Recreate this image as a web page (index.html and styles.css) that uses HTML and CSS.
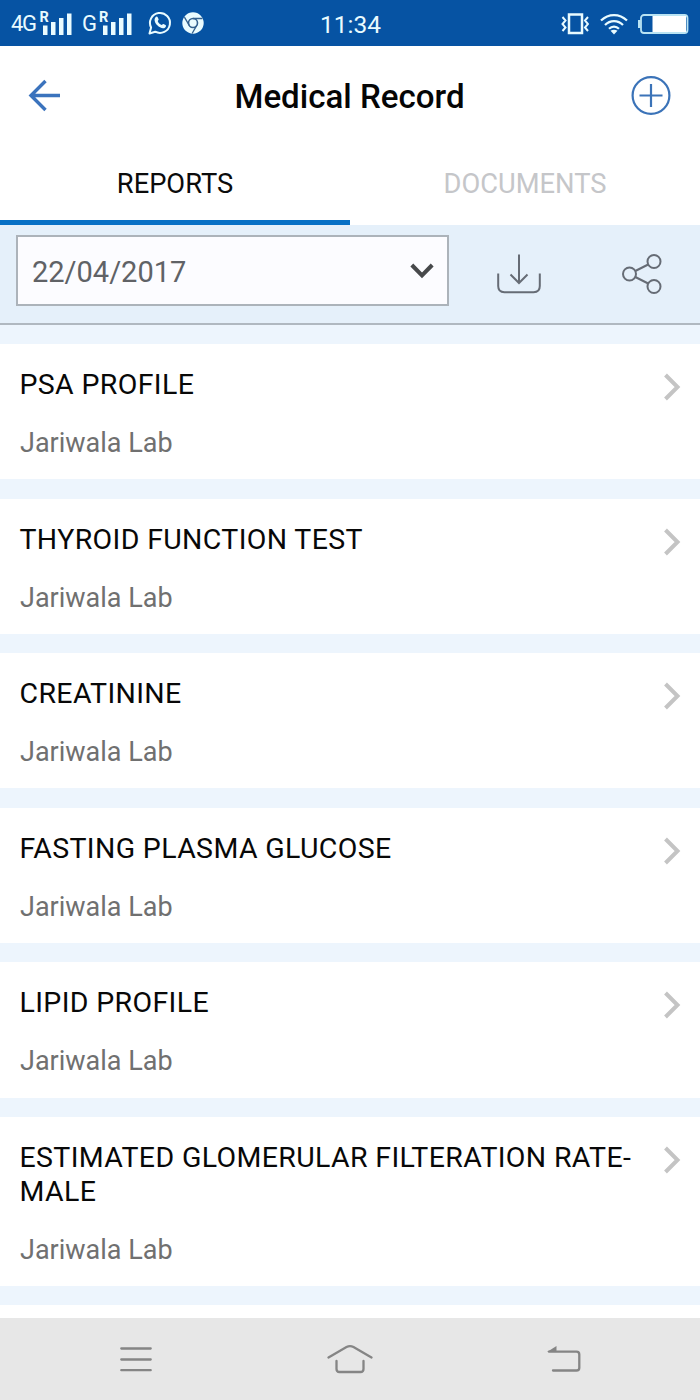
FILE: index.html
```html
<!DOCTYPE html>
<html lang="en">
<head>
<meta charset="utf-8">
<title>Medical Record</title>
<link rel="stylesheet" href="styles.css">
</head>
<body>
<div class="phone">
  <div class="status">
    <div class="status-left">
      <svg class="sim" width="66" height="46" viewBox="0 0 66 46">
        <text class="net" x="0" y="31" textLength="26">4G</text>
        <text class="roam" x="28.500" y="22">R</text>
        <path class="bars" d="M32 25.500h4.500v9.500H32zM40 22h4.500v13H40zM48 18h4.500v17H48zM56 13.500h4.500V35H56z"/>
      </svg>
      <svg class="sim" width="66" height="46" viewBox="0 0 66 46">
        <text class="net" x="5" y="31">G</text>
        <text class="roam" x="22" y="22">R</text>
        <path class="bars" d="M26 25.500h4.500v9.500H26zM34 22h4.500v13H34zM42 18h4.500v17H42zM50 13.500h4.500V35H50z"/>
      </svg>
      <svg class="whatsapp" width="26" height="26" viewBox="0 0 26 26">
        <path d="M2.500 23.500l1.600-6A10 10 0 1 1 8.200 21.700z" fill="none" stroke="#e9fbff" stroke-width="2" stroke-linejoin="round"/>
        <path d="M8.500 7.200c.8-.9 1.900-.8 2.300.2l.8 1.900c.3.700-.9 1.500-.8 2 .6 1.600 2 3 3.700 3.700.6.200 1.300-1.300 2-.9l2 1c.9.500.5 1.900-.5 2.600-2.200 1.500-5.500-.1-7.700-2.400S6.500 9.500 8.500 7.200z" fill="#e9fbff"/>
      </svg>
      <svg class="chrome" width="24" height="24" viewBox="0 0 24 24">
        <circle cx="12" cy="12" r="10.700" fill="#e9fbff"/>
        <circle cx="12" cy="12" r="4.500" fill="#e9fbff" stroke="#33618f" stroke-width="1.600"/>
        <path d="M12 7.500h9.500M8.100 14.200L3.400 6.200M15.900 14.200l-4.800 8.300" stroke="#33618f" stroke-width="1.300"/>
      </svg>
    </div>
    <div class="clock">11:34</div>
    <div class="status-right">
      <svg width="28" height="24" viewBox="0 0 28 24">
        <rect x="8" y="2.500" width="13" height="18.500" fill="none" stroke="#e9fbff" stroke-width="2.500"/>
        <path d="M1.500 5l3 3.500-3 3.500 3 3.500-3 3.500M27 5l-3 3.500 3 3.500-3 3.500 3 3.500" fill="none" stroke="#e9fbff" stroke-width="2"/>
      </svg>
      <svg class="wifi" width="28" height="22" viewBox="0 0 28 22">
        <path d="M1 7.500C8.500.2 19.500.2 27 7.500M5 12c5-5.300 13-5.300 18 0M9 15.800c3-3 7-3 10 0" fill="none" stroke="#e9fbff" stroke-width="2.200"/>
        <path d="M10.500 17.800q3.500-2 7 0L14 21.500z" fill="#e9fbff"/>
      </svg>
      <svg class="battery" width="52" height="22" viewBox="0 0 52 22">
        <rect x="4" y="2" width="46.500" height="18" rx="3" fill="none" stroke="#b9e3f3" stroke-width="1.800"/>
        <path d="M3.500 7H1v8h2.500" fill="#b9e3f3"/>
        <path d="M15.500 3h33.500v16H15.500z" fill="#fff"/>
      </svg>
    </div>
  </div>

  <header class="header">
    <svg width="34" height="40" viewBox="0 0 34 40">
      <path d="M32 20.500H3M17.500 6L3 20.500 17.500 35" fill="none" stroke="#3b73bd" stroke-width="3.400"/>
    </svg>
    <h1 class="title">Medical Record</h1>
    <svg class="add" width="40" height="40" viewBox="0 0 40 40">
      <g fill="none" stroke="#3b73b8" stroke-width="2.200"><circle cx="20" cy="20.500" r="18.400"/><path d="M20 9v23M8.500 20.500h23"/></g>
    </svg>
  </header>

  <nav class="tabs">
    <div class="tab tab-active">REPORTS</div>
    <div class="tab">DOCUMENTS</div>
  </nav>

  <section class="filter">
    <div class="select">
      <span class="date">22/04/2017</span>
      <svg width="24" height="18" viewBox="0 0 24 18"><path d="M1.800 3L12 13.500 22.200 3" fill="none" stroke="#47494b" stroke-width="4"/></svg>
    </div>
    <svg class="download" width="44" height="40" viewBox="0 0 44 40">
      <path d="M1.200 19.500V32q0 6.200 6.200 6.200h29.200q6.200 0 6.200-6.200V19.500M22 .5V29M13.500 20.500L22 29l8.500-8.500" fill="none" stroke="#666c75" stroke-width="2"/>
    </svg>
    <svg class="share" width="40" height="40" viewBox="0 0 40 40">
      <g fill="none" stroke="#666c75" stroke-width="2"><circle cx="7.500" cy="20" r="6.500"/><circle cx="32" cy="7.500" r="6.500"/><circle cx="32" cy="32.500" r="6.500"/><path d="M13.300 17L26.200 10.500M13.300 23l12.900 6.500"/></g>
    </svg>
  </section>

  <main class="list">
    <article class="card"><div><h2 class="name">PSA PROFILE</h2><p class="lab">Jariwala Lab</p></div><svg class="chev" width="18" height="28" viewBox="0 0 18 28"><path d="M2.500 2L14.500 14 2.500 26"/></svg></article>
    <article class="card"><div><h2 class="name">THYROID FUNCTION TEST</h2><p class="lab">Jariwala Lab</p></div><svg class="chev" width="18" height="28" viewBox="0 0 18 28"><path d="M2.500 2L14.500 14 2.500 26"/></svg></article>
    <article class="card"><div><h2 class="name">CREATININE</h2><p class="lab">Jariwala Lab</p></div><svg class="chev" width="18" height="28" viewBox="0 0 18 28"><path d="M2.500 2L14.500 14 2.500 26"/></svg></article>
    <article class="card"><div><h2 class="name">FASTING PLASMA GLUCOSE</h2><p class="lab">Jariwala Lab</p></div><svg class="chev" width="18" height="28" viewBox="0 0 18 28"><path d="M2.500 2L14.500 14 2.500 26"/></svg></article>
    <article class="card"><div><h2 class="name">LIPID PROFILE</h2><p class="lab">Jariwala Lab</p></div><svg class="chev" width="18" height="28" viewBox="0 0 18 28"><path d="M2.500 2L14.500 14 2.500 26"/></svg></article>
    <article class="card"><div><h2 class="name">ESTIMATED GLOMERULAR FILTERATION RATE-<br>MALE</h2><p class="lab">Jariwala Lab</p></div><svg class="chev" width="18" height="28" viewBox="0 0 18 28"><path d="M2.500 2L14.500 14 2.500 26"/></svg></article>
    <article class="card card-next"></article>
  </main>

  <footer class="navbar">
    <svg width="34" height="28" viewBox="0 0 34 28"><path d="M2.300 3.500h29.400M2.300 14.500h29.400M2.300 25.200h29.400"/></svg>
    <svg width="46" height="30" viewBox="0 0 46 30"><path d="M1.500 13.500L19.500 3q3.500-1.800 7 0l18 10.500M9.500 17v8q0 3 3 3h21q3 0 3-3v-8"/></svg>
    <svg width="34" height="28" viewBox="0 0 34 28"><path d="M2 6.700h27.500q2.800 0 2.800 2.800v13.200q0 2.800-2.800 2.800H6"/><path class="tip" d="M0 7L9.500 1v6z"/></svg>
  </footer>
</div>
</body>
</html>
```
FILE: styles.css
```css
* { box-sizing: border-box; }
body { margin: 0; background: #eef5fd; font-family: Roboto, "Liberation Sans", sans-serif; }
svg { display: block; flex: none; }
.phone { width: 700px; height: 1400px; display: flex; flex-direction: column; overflow: hidden; }

.status { height: 46px; flex: none; display: grid; grid-template-columns: 1fr 60px 1fr; align-items: center; background: #0653a3; }
.status-left { display: flex; align-items: center; padding-left: 11px; }
.net { font-size: 22px; fill: #e9fbff; }
.roam { font-size: 14.5px; font-weight: 700; fill: #e9fbff; }
.bars { fill: #e9fbff; }
.whatsapp { margin-left: 4px; }
.chrome { margin-left: 8px; }
.clock { font-size: 24.5px; line-height: 28px; color: #e9fbff; text-align: center; padding-top: 3px; }
.status-right { display: flex; justify-content: flex-end; align-items: center; padding: 1px 11px 0 0; }
.wifi { margin-left: 11px; }
.battery { margin-left: 9px; }

.header { height: 98px; flex: none; display: flex; align-items: center; justify-content: space-between; padding: 0 29px 0 28px; background: #fff; }
.title { margin: 0; padding: 4px 0 0 6px; font-size: 33.1px; line-height: 40px; font-weight: 500; color: #050505; }

.tabs { height: 81px; flex: none; display: flex; background: #fff; }
.tab { flex: 1; padding-top: 24px; text-align: center; font-size: 27.3px; line-height: 32px; color: #c5c6c9; border-bottom: 5px solid #fff; }
.tab-active { color: #0b0b0b; border-bottom-color: #0770c5; }

.filter { height: 100px; flex: none; display: flex; align-items: flex-start; padding: 10px 38px 0 16px; background: #e5f0fa; border-bottom: 2px solid #b0b8c0; }
.select { width: 433px; height: 71px; display: flex; align-items: center; justify-content: space-between; padding: 0 13px 0 14px; background: #fcfcff; border: 2px solid #acb3ba; }
.date { font-size: 29px; line-height: 34px; color: #606266; padding-top: 2px; }
.download { margin: 19px 0 0 48px; }
.share { margin: 19px 0 0 auto; }

.list { flex: 1; min-height: 0; overflow: hidden; display: flex; flex-direction: column; gap: 19.4px; padding-top: 19px; background: #edf5fd; }
.card { flex: none; display: flex; justify-content: space-between; padding: 24px 19px 20.2px 20px; background: #fff; }
.name { margin: 0; font-size: 28.5px; line-height: 34px; font-weight: 400; letter-spacing: .36px; margin-left: -.5px; color: #080808; white-space: nowrap; }
.lab { margin: 25px 0 0; font-size: 27px; line-height: 32px; color: #707070; }
.chev { margin-top: 5px; fill: none; stroke: #c4c4c4; stroke-width: 4; }
.card-next { height: 60px; padding: 0; }

.navbar { height: 82px; flex: none; display: flex; align-items: center; justify-content: space-between; padding: 0 119px; background: #e7e7e7; }
.navbar path { fill: none; stroke: #858585; stroke-width: 2.300; stroke-linecap: round; }
.navbar .tip { fill: #858585; stroke: none; }
```
